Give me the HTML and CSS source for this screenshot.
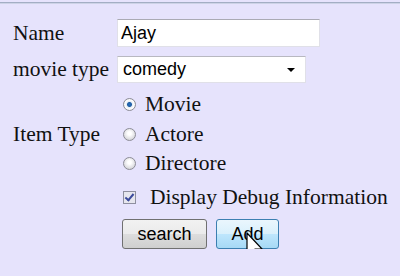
FILE: index.html
```html
<!DOCTYPE html>
<html>
<head>
  <title>Movie Item</title>
  <link rel="stylesheet" href="styles.css">
</head>
<body>
  <div class="topbar"></div>
  <form class="form">
    <label class="lbl row1" for="name">Name</label>
    <div class="field row1"><input type="text" id="name" class="txt" value="Ajay"></div>

    <label class="lbl row2" for="movietype">movie type</label>
    <div class="field row2">
      <div class="select" id="movietype">
        <span>comedy</span>
        <span class="arrow"></span>
      </div>
    </div>

    <div class="lbl">Item Type</div>
    <div class="field radios">
      <label class="opt"><input type="radio" name="itemtype" checked> Movie</label>
      <label class="opt"><input type="radio" name="itemtype"> Actore</label>
      <label class="opt"><input type="radio" name="itemtype"> Directore</label>
    </div>

    <div></div>
    <div class="field debug">
      <label class="opt"><input type="checkbox" checked> Display Debug Information</label>
    </div>

    <div></div>
    <div class="field buttons">
      <button type="button" class="btn">search</button>
      <button type="button" class="btn hot">Add
        <svg class="cursor" width="20" height="32" viewBox="0 0 20 32">
          <path d="M1 1 L1 23 L6 18 L10 27 L13 25.5 L9 17 L16 17 Z" fill="#fff" stroke="#000" stroke-width="1.2" stroke-linejoin="round"/>
        </svg>
      </button>
    </div>
  </form>
</body>
</html>
```

FILE: styles.css
```css
body {
  margin: 0;
  background-color: #e6e3fc;
  font-family: "Liberation Serif", "Times New Roman", serif;
  color: #111;
}
.topbar {
  margin-top: 2px;
  height: 1px;
  border-top: 1px solid #a3aec4;
  background-color: #cdd3e6;
}
.form {
  display: grid;
  grid-template-columns: 104px 1fr;
  padding: 15px 0 0 13px;
  font-size: 21.5px;
}
.lbl {
  align-self: center;
}
.field {
  display: flex;
}
.row1 {
  margin-bottom: 9px;
}
.row2 {
  margin-bottom: 7px;
}
.txt {
  width: 203px;
  height: 28px;
  box-sizing: border-box;
  border: 1px solid #e0e0e8;
  border-top-color: #aaaab4;
  padding: 0 3px;
  font-family: "Liberation Sans", Arial, sans-serif;
  font-size: 18px;
  color: #000;
  background: #fff;
}
.select {
  width: 189px;
  height: 27px;
  box-sizing: border-box;
  border: 1px solid #e0e0e8;
  border-top-color: #b8b8c0;
  background: #fff;
  display: flex;
  align-items: center;
  justify-content: space-between;
  padding: 0 10px 0 5px;
  font-family: "Liberation Sans", Arial, sans-serif;
  font-size: 18px;
  color: #000;
}
.arrow {
  width: 0;
  height: 0;
  border-left: 4px solid transparent;
  border-right: 4px solid transparent;
  border-top: 4px solid #000;
}
.radios {
  flex-direction: column;
}
.opt {
  display: flex;
  align-items: center;
  height: 29.5px;
  padding-left: 6px;
}
.opt input {
  appearance: none;
  margin: 0 9px 0 0;
  width: 13px;
  height: 13px;
  box-sizing: border-box;
}
.opt input[type="radio"] {
  border-radius: 50%;
  border: 1px solid #8c8c96;
  background: radial-gradient(circle at 50% 40%, #fff 20%, #c4c4ca 100%);
}
.opt input[type="radio"]:checked {
  background: radial-gradient(circle, #2a6fb8 0, #1f5ea6 26%, #e8eef4 38%, #fff 60%, #c8c8ce 100%);
}
.debug {
  margin-top: 4px;
}
.debug .opt input {
  margin-right: 14px;
  border: 1px solid #8e8f9f;
  background: #e6e6ee;
  position: relative;
}
.debug .opt input::after {
  content: "";
  position: absolute;
  left: 3px;
  top: 0px;
  width: 3px;
  height: 7px;
  border: solid #3b4a9c;
  border-width: 0 2px 2px 0;
  transform: rotate(40deg);
}
.buttons {
  margin-top: 7px;
  padding-left: 5px;
  gap: 9px;
}
.btn {
  height: 30px;
  font-family: "Liberation Sans", Arial, sans-serif;
  font-size: 18px;
  color: #000;
  border: 1px solid #707070;
  border-radius: 3px;
  background: linear-gradient(#f2f2f2 0, #ebebeb 50%, #dddddd 51%, #cfcfcf 100%);
  width: 85px;
  padding: 0;
}
.btn.hot {
  width: 63px;
  border-color: #3c7fb1;
  background: linear-gradient(#eaf6fd 0, #d9f0fc 50%, #bee6fd 51%, #a7d9f5 100%);
  position: relative;
}
.cursor {
  position: absolute;
  left: 29px;
  top: 12px;
}
```
